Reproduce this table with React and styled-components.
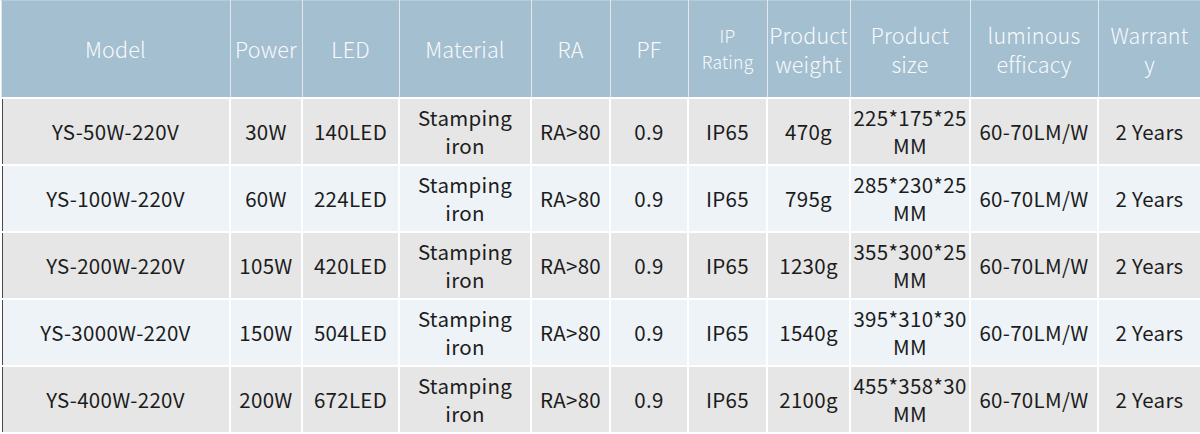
import React from "react";
import styled, { createGlobalStyle } from "styled-components";

const Global = createGlobalStyle`
  html, body { margin: 0; padding: 0; background: #ffffff; }
  body { font-family: "Noto Sans CJK SC", "Noto Sans", sans-serif; }
`;

const Table = styled.table`
  width: 1200px;
  border-collapse: collapse;
  table-layout: fixed;
`;

const HeadRow = styled.tr`
  height: 97px;
  background: #a4bfd0;
`;

const Th = styled.th`
  font-weight: 300;
  font-size: ${(p) => (p.$small ? "17.5px" : "21.5px")};
  line-height: ${(p) => (p.$small ? "26px" : "29px")};
  letter-spacing: 0.2px;
  color: #f7fafc;
  text-align: center;
  vertical-align: middle;
  padding: 0;
  border: 1.5px solid #dfe8ee;
  border-top: 1px solid #b8cdda;
  white-space: pre-line;
`;

const Row = styled.tr`
  height: 67px;
  background: ${(p) => (p.$alt ? "#eef3f7" : "#e6e6e6")};
`;

const Td = styled.td`
  font-size: 20.5px;
  line-height: 28px;
  font-weight: 400;
  color: #1c1c1c;
  text-align: center;
  vertical-align: middle;
  padding: 0;
  border: 2px solid #ffffff;
  white-space: pre-line;
  letter-spacing: 0.3px;
  box-shadow: ${(p) => (p.$edge ? "inset 1px 0 0 #4a4a4a" : "none")};
`;

const widths = [229, 72, 97, 132, 79, 78, 79, 83, 120, 128, 103];

const headers = [
  { t: "Model" },
  { t: "Power" },
  { t: "LED" },
  { t: "Material" },
  { t: "RA" },
  { t: "PF" },
  { t: "IP\nRating", small: true },
  { t: "Product\nweight" },
  { t: "Product\nsize" },
  { t: "luminous\nefficacy" },
  { t: "Warrant\ny" },
];

const rows = [
  ["YS-50W-220V", "30W", "140LED", "Stamping\niron", "RA>80", "0.9", "IP65", "470g", "225*175*25\nMM", "60-70LM/W", "2 Years"],
  ["YS-100W-220V", "60W", "224LED", "Stamping\niron", "RA>80", "0.9", "IP65", "795g", "285*230*25\nMM", "60-70LM/W", "2 Years"],
  ["YS-200W-220V", "105W", "420LED", "Stamping\niron", "RA>80", "0.9", "IP65", "1230g", "355*300*25\nMM", "60-70LM/W", "2 Years"],
  ["YS-3000W-220V", "150W", "504LED", "Stamping\niron", "RA>80", "0.9", "IP65", "1540g", "395*310*30\nMM", "60-70LM/W", "2 Years"],
  ["YS-400W-220V", "200W", "672LED", "Stamping\niron", "RA>80", "0.9", "IP65", "2100g", "455*358*30\nMM", "60-70LM/W", "2 Years"],
];

export default function App() {
  return (
    <>
      <Global />
      <Table>
        <colgroup>
          {widths.map((w, i) => (
            <col key={i} style={{ width: w }} />
          ))}
        </colgroup>
        <thead>
          <HeadRow>
            {headers.map((h, i) => (
              <Th key={i} $small={h.small}>
                {h.t}
              </Th>
            ))}
          </HeadRow>
        </thead>
        <tbody>
          {rows.map((r, i) => (
            <Row key={i} $alt={i % 2 === 1}>
              {r.map((c, j) => (
                <Td key={j} $edge={j === 0}>
                  {c}
                </Td>
              ))}
            </Row>
          ))}
        </tbody>
      </Table>
    </>
  );
}
